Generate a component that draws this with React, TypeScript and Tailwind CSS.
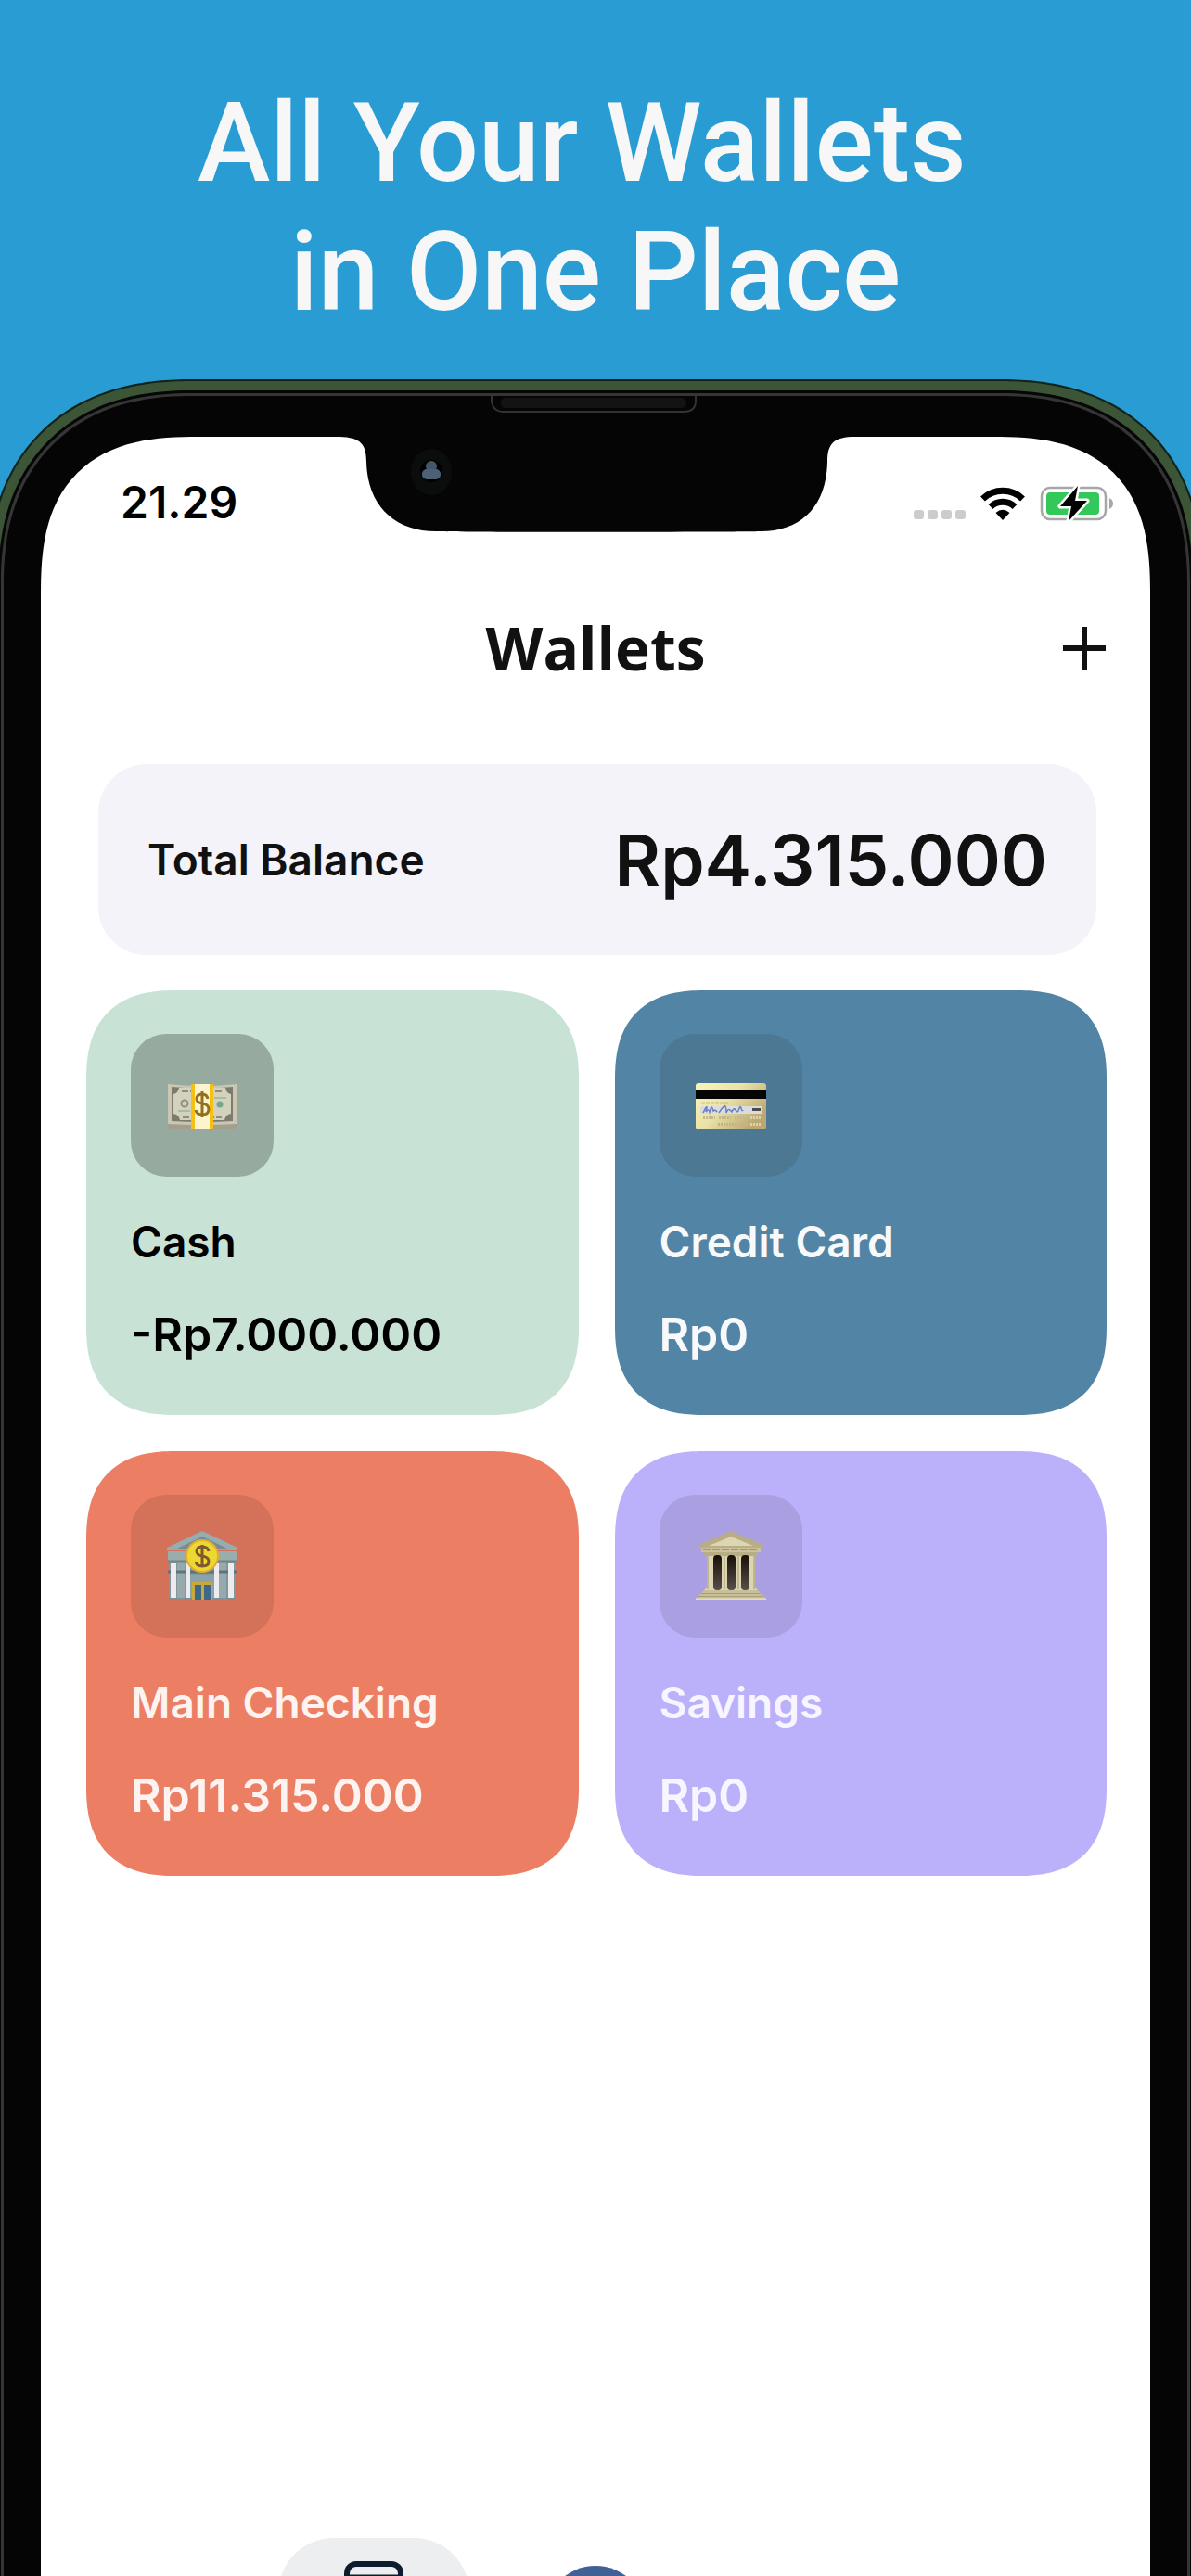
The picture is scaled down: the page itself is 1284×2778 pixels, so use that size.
import React from 'react';

type Wallet = {
  name: string;
  amount: string;
  card: string;
  tile: string;
  icon: React.ReactNode;
};

const CashIcon = () => (
  <svg viewBox="0 0 76 76" className="size-[76px]" aria-hidden="true">
    <path d="M1 15 Q38 19 75 15 V60 Q75 63 72 63 H4 Q1 63 1 60Z" fill="#a39f8c" />
    <path d="M1 15 Q38 19 75 15 V58 Q38 60 1 58Z" fill="#c9c6b2" />
    <path d="M5 18 Q38 21 71 18 V55 Q38 57 5 55Z" fill="#7d7a70" />
    <path d="M13 19 H63 Q64 25 69 26 V47 Q63 48 62 54 H14 Q13 48 7 47 V26 Q12 25 13 19Z" fill="#d3d2bd" />
    <path d="M16 23 H60 M17 51 H59" stroke="#908d7e" strokeWidth="2" strokeDasharray="7 2" />
    <circle cx="19" cy="36" r="3.5" fill="none" stroke="#8f9184" strokeWidth="2" />
    <circle cx="57" cy="37" r="3.5" fill="#74a88a" />
    <path d="M12 44 h13 M51 30 h13" stroke="#a7bda4" strokeWidth="2" />
    <path d="M26 15 h24 v48 q-12 2 -24 0Z" fill="#f5bf14" />
    <path d="M30 15 h16 v48 q-8 1 -16 0Z" fill="#fcf3cf" />
    <path
      d="M44 31 q-1 -5 -6 -5 q-6 0 -6 5 q0 4 6 5 q7 1 7 6 q0 6 -7 6 q-6 0 -7 -5 M38 23 v28"
      fill="none"
      stroke="#93701c"
      strokeWidth="3"
    />
  </svg>
);

const CardIcon = () => (
  <svg viewBox="0 0 76 76" className="size-[76px]" aria-hidden="true">
    <defs>
      <linearGradient id="gold" x1="0" y1="0" x2="1" y2="0.6">
        <stop offset="0" stopColor="#f8f6bb" />
        <stop offset="0.5" stopColor="#ebe2a6" />
        <stop offset="1" stopColor="#bba873" />
      </linearGradient>
    </defs>
    <rect x="0" y="14" width="76" height="50" rx="3" fill="url(#gold)" />
    <rect x="0" y="22" width="76" height="9" fill="#050505" />
    <path d="M6 35.500 h30" stroke="#9a9273" strokeWidth="1.500" strokeDasharray="4 1" />
    <rect x="5" y="39" width="67" height="8" fill="#dcdcdc" />
    <path
      d="M8 46 q4 -8 4 -6 t-1 5 q3 -4 4 0 q2 -7 3 -4 t1 3 q2 -2 4 1 M25 46 q6 -9 7 -7 t1 7 q2 -5 4 -3 t2 2 q2 -5 4 -2 t3 1 q2 -7 3 -3 t2 2"
      fill="none"
      stroke="#6580c4"
      strokeWidth="1.500"
    />
    <rect x="61" y="41" width="9" height="3" fill="#4c4c4c" />
    <path d="M8 51.500 h13 M25 51.500 h13 M42 51.500 h13" stroke="#c4b98a" strokeWidth="3" strokeDasharray="2 1" />
    <path d="M59 51.500 h13 M59 58.500 h13" stroke="#ddd2a8" strokeWidth="3" strokeDasharray="2 1" />
    <path d="M24 58.500 h32" stroke="#c4b484" strokeWidth="3" strokeDasharray="2 1" />
  </svg>
);

const BankIcon = () => (
  <svg viewBox="0 0 76 76" className="size-[76px]" aria-hidden="true">
    <rect x="2" y="32" width="72" height="41" fill="#82979c" />
    <path d="M11 32 h8 v40 h-8Z M56 32 h8 v40 h-8Z" fill="#98a9ad" />
    <path d="M1 44 h74" stroke="#5d757d" strokeWidth="3" />
    <rect x="1" y="22" width="74" height="12" fill="#9badaa" />
    <path d="M1 33 h74" stroke="#70868b" strokeWidth="3" />
    <path d="M38 0 L76 18 V21 H0 V18Z" fill="#95adb0" />
    <path d="M38 6 L65 19 H11Z" fill="#728d93" />
    <rect x="24" y="47" width="28" height="25" fill="#8ba2aa" />
    <rect x="27" y="55" width="22" height="19" fill="#c9a83c" />
    <path d="M30 58 h7 v16 h-7Z M40 58 h7 v16 h-7Z" fill="#3d6888" />
    <path d="M4 35 h6 v37 h-6Z M20 35 h5 v37 h-5Z M51 35 h5 v37 h-5Z M66 35 h6 v37 h-6Z" fill="#ececef" />
    <path d="M2 72 h10 v3 h-10Z M18 72 h9 v3 h-9Z M49 72 h9 v3 h-9Z M64 72 h10 v3 h-10Z" fill="#76919a" />
    <circle cx="38" cy="27" r="18" fill="#e5ad30" />
    <circle cx="38" cy="27" r="16" fill="#ecd832" />
    <path
      d="M45 22 q-1 -5 -7 -5 q-6 0 -6 5 q0 4 6 5 q7 1 7 6 q0 5 -7 5 q-6 0 -7 -5 M38 15 v24"
      fill="none"
      stroke="#80582b"
      strokeWidth="3"
    />
  </svg>
);

const TempleIcon = () => (
  <svg viewBox="0 0 76 76" className="size-[76px]" aria-hidden="true">
    <defs>
      <linearGradient id="gap" x1="0" y1="0" x2="0" y2="1">
        <stop offset="0" stopColor="#181006" />
        <stop offset="1" stopColor="#57504c" />
      </linearGradient>
    </defs>
    <path d="M38 0 L73 15 V18 H3 V15Z" fill="#b8ad84" />
    <path d="M38 6 L62 16 H14Z" fill="#ddd6b3" />
    <rect x="6" y="18" width="64" height="5" fill="#cbc29d" />
    <path d="M8 20 h60" stroke="#a0966f" strokeWidth="2" strokeDasharray="8 2" />
    <rect x="9" y="23" width="58" height="4" fill="#b8ae86" />
    <path d="M12 27 h52 v34 l3 3 H9 l3 -3Z" fill="#dcd5b2" />
    <path d="M13 27 v36 M63 27 v36 M31 27 v36 M46 27 v36" stroke="#c0b68f" strokeWidth="2" />
    <rect x="19" y="26" width="9" height="38" rx="4" fill="url(#gap)" />
    <rect x="34" y="26" width="9" height="38" rx="4" fill="url(#gap)" />
    <rect x="49" y="26" width="9" height="38" rx="4" fill="url(#gap)" />
    <path d="M9 64 H67 L76 73 V75 H0 V73Z" fill="#c8bf98" />
    <path d="M6 67.500 h64 M3 70.500 h70" stroke="#a89e78" strokeWidth="1" />
    <path d="M0 73.500 h76" stroke="#e4ddba" strokeWidth="2" />
  </svg>
);

const wallets: Wallet[] = [
  {
    name: 'Cash',
    amount: '-Rp7.000.000',
    card: 'bg-[#c8e3d5] text-black',
    tile: 'bg-[#96aaa0]',
    icon: <CashIcon />,
  },
  {
    name: 'Credit Card',
    amount: 'Rp0',
    card: 'bg-[#5285a5] text-[#f8f9fb]',
    tile: 'bg-[#4c7893]',
    icon: <CardIcon />,
  },
  {
    name: 'Main Checking',
    amount: 'Rp11.315.000',
    card: 'bg-[#eb7e63] text-[#fdf3f0]',
    tile: 'bg-[#d37259]',
    icon: <BankIcon />,
  },
  {
    name: 'Savings',
    amount: 'Rp0',
    card: 'bg-[#bbb0fa] text-[#f7f5ff]',
    tile: 'bg-[#a99fe1]',
    icon: <TempleIcon />,
  },
];

const Notch = () => (
  <svg
    viewBox="358 427 568 152"
    className="absolute left-1/2 top-0 h-[152px] w-[568px] -translate-x-1/2"
    aria-hidden="true"
  >
    <path
      d="M362 471 C386 471 395 476 395 498 C396 545 425 573 470 573 C500 574 790 574 820 573 C865 573 891 545 892 498 C892 478 899 471 922 471 V460 H362Z"
      fill="#050505"
    />
    <path d="M530 427 V432 Q531 444 543 444 H737 Q750 444 750 432 V427" fill="none" stroke="#333333" strokeWidth="2" />
    <rect x="540" y="429" width="200" height="11" rx="5" fill="#131313" />
    <ellipse cx="465" cy="509" rx="22" ry="25" fill="#0b0d0d" />
    <circle cx="465" cy="508" r="12" fill="#000000" />
    <circle cx="465" cy="503" r="6" fill="#43566a" />
    <rect x="455" y="506" width="20" height="11" rx="5" fill="#4d6176" />
  </svg>
);

const StatusBar = () => (
  <div className="flex h-[140px] items-start justify-between pl-[86px] pr-[39px] pt-[41px]">
    <span className="text-[48px] font-semibold leading-[60px]">21.29</span>
    <div className="flex items-center gap-4 pt-[12px]">
      <svg viewBox="0 0 56 38" className="h-[38px] w-14" aria-hidden="true">
        <g fill="#cccccc">
          <rect x="0" y="26" width="11" height="10" rx="3" />
          <rect x="15" y="26" width="11" height="10" rx="3" />
          <rect x="30" y="26" width="11" height="10" rx="3" />
          <rect x="45" y="26" width="11" height="10" rx="3" />
        </g>
      </svg>
      <svg viewBox="0 0 48 38" className="h-[38px] w-12" aria-hidden="true">
        <path d="M2.500 14 A31 31 0 0 1 45.500 14" fill="none" stroke="#000" strokeWidth="7" />
        <path d="M11 22.500 A19 19 0 0 1 37 22.500" fill="none" stroke="#000" strokeWidth="7" />
        <path d="M24 37 L16.500 29 Q24 22.500 31.500 29Z" fill="#000" />
      </svg>
      <svg viewBox="0 0 80 38" className="h-[38px] w-20" aria-hidden="true">
        <rect x="2" y="2" width="69" height="34" rx="9" fill="none" stroke="#a6a6a6" strokeWidth="2.500" />
        <rect x="7" y="7" width="57" height="24" rx="4" fill="#34c759" />
        <path d="M75 13 Q79 15 79 19 Q79 23 75 25Z" fill="#a6a6a6" />
        <path
          d="M41 0 L22 22 H34 L31 38 L51 16 H38Z"
          fill="#000"
          stroke="#fff"
          strokeWidth="5"
          strokeLinejoin="round"
          paintOrder="stroke"
        />
      </svg>
    </div>
  </div>
);

const WalletCard: React.FC<{ wallet: Wallet }> = ({ wallet }) => (
  <article
    className={`flex h-[458px] flex-col rounded-[96px] px-12 pt-[47px] [corner-shape:superellipse(1.3)] ${wallet.card}`}
  >
    <div className={`flex size-[154px] items-center justify-center rounded-[38px] ${wallet.tile}`}>
      {wallet.icon}
    </div>
    <h2 className="mt-[42px] text-[46px] font-semibold leading-[56px]">{wallet.name}</h2>
    <p className="mt-[42px] text-[50px] font-semibold leading-[60px]">{wallet.amount}</p>
  </article>
);

const TabBar = () => (
  <nav className="grid h-[41px] shrink-0 grid-cols-5 items-start overflow-hidden">
    <button
      type="button"
      aria-label="Wallets"
      className="col-start-2 flex h-[120px] w-[206px] justify-center justify-self-center rounded-[60px] bg-[#edeef0] pt-[25px]"
    >
      <svg viewBox="0 0 64 64" className="size-16" aria-hidden="true">
        <rect x="3" y="3" width="58" height="58" rx="10" fill="none" stroke="#0f1c2e" strokeWidth="6" />
        <path d="M3 17 H61" stroke="#0f1c2e" strokeWidth="5" />
      </svg>
    </button>
    <button
      type="button"
      aria-label="Add transaction"
      className="mt-[30px] size-[110px] justify-self-center rounded-full bg-[#3f6196]"
    />
  </nav>
);

const App: React.FC = () => {
  return (
    <div className="flex h-screen flex-col overflow-hidden bg-[#289cd3] font-['Inter','Liberation_Sans',sans-serif]">
      <header className="h-[409px] shrink-0 pt-[86px] text-center font-['Roboto','Liberation_Sans',sans-serif] text-[118px] font-medium leading-[139px] text-[#f7f7f7]">
        <h1 className="whitespace-pre">{'All Your Wallets \nin One Place'}</h1>
      </header>

      {/* phone frame, cut off by the bottom of the page */}
      <div className="-mx-[14px] flex min-h-0 flex-1 flex-col rounded-t-[220px] border-2 border-b-0 border-[#12241a] bg-[#3d5537] px-[10px] pt-[10px] [corner-shape:superellipse(1.2)]">
        <div className="flex min-h-0 flex-1 flex-col rounded-t-[208px] bg-[#060606] px-[3px] pt-[3px] [corner-shape:superellipse(1.2)]">
          <div className="relative flex min-h-0 flex-1 flex-col rounded-t-[205px] border-[3px] border-b-0 border-[#353535] bg-[#050505] px-[40px] pt-[44px] [corner-shape:superellipse(1.2)]">
            <div className="flex min-h-0 flex-1 flex-col rounded-t-[170px] bg-white text-black [corner-shape:superellipse(1.4)]">
              <StatusBar />

              <div className="grid grid-cols-[1fr_auto_1fr] items-center px-12 pt-[48px] text-[#111111]">
                <h2 className="col-start-2 font-['Open_Sans','Liberation_Sans',sans-serif] text-[64px] font-bold leading-[80px]">
                  Wallets
                </h2>
                <button type="button" aria-label="Add wallet" className="justify-self-end">
                  <svg viewBox="0 0 46 46" className="size-[46px]" aria-hidden="true">
                    <path d="M23 0 V46 M0 23 H46" stroke="#111" strokeWidth="6" />
                  </svg>
                </button>
              </div>

              <section className="ml-[62px] mr-[58px] mt-[85px] flex h-[206px] shrink-0 items-center justify-between rounded-[52px] bg-[#f3f3f9] px-[53px] text-[#111111]">
                <span className="text-[46px] font-semibold">Total Balance</span>
                <span className="text-[76px] font-semibold">Rp4.315.000</span>
              </section>

              <main className="mt-[38px] grid grid-cols-2 gap-[39px] pl-[49px] pr-[47px]">
                {wallets.map((wallet) => (
                  <WalletCard key={wallet.name} wallet={wallet} />
                ))}
              </main>

              <div className="flex-1" />
              <TabBar />
            </div>
            <Notch />
          </div>
        </div>
      </div>
    </div>
  );
};

export default App;
